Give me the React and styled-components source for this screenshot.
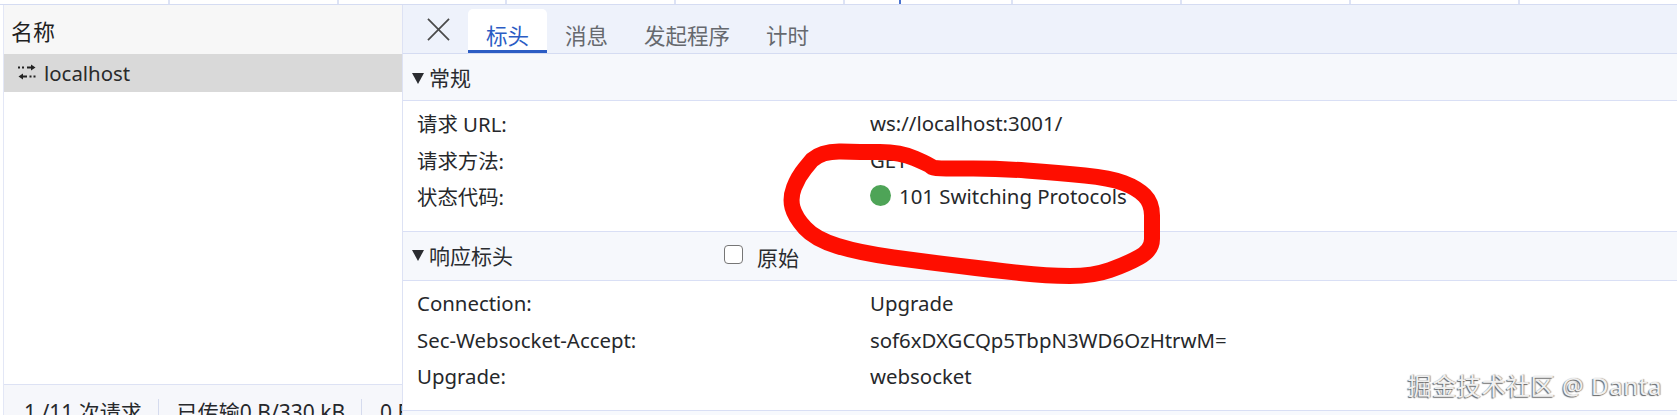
import React from 'react';
import styled, { createGlobalStyle } from 'styled-components';

const GlobalStyle = createGlobalStyle`
  html, body {
    margin: 0;
    padding: 0;
    background: #fff;
  }
  body {
    font-family: 'Noto Sans', 'Noto Sans CJK SC', sans-serif;
    color: #26282b;
  }
`;

const tabs = ['标头', '消息', '发起程序', '计时'];

const generalRows = [
  { name: '请求 URL:', value: 'ws://localhost:3001/' },
  { name: '请求方法:', value: 'GET' },
  { name: '状态代码:', value: '101 Switching Protocols', status: true }
];

const responseRows = [
  { name: 'Connection:', value: 'Upgrade' },
  { name: 'Sec-Websocket-Accept:', value: 'sof6xDXGCQp5TbpN3WD6OzHtrwM=' },
  { name: 'Upgrade:', value: 'websocket' }
];

// the hand-drawn circle, smoothed through the midpoints
const scribble = [
  [812, 160], [822, 151], [860, 152], [900, 152], [930, 165], [934, 169], [993, 168], [1060, 173], [1110, 178],
  [1137, 188], [1152, 203], [1152, 228], [1152, 250], [1127, 264], [1093, 276], [1047, 276],
  [993, 270], [927, 262], [860, 253], [815, 239], [795, 217], [790, 198], [798, 177], [812, 160]
];

const smoothPath = points => {
  let d = `M${points[0][0]} ${points[0][1]}`;
  for (let i = 1; i < points.length - 1; i++) {
    const mx = (points[i][0] + points[i + 1][0]) / 2;
    const my = (points[i][1] + points[i + 1][1]) / 2;
    d += ` Q${points[i][0]} ${points[i][1]} ${mx} ${my}`;
  }
  return d + ` L${points[points.length - 1][0]} ${points[points.length - 1][1]}`;
};

export default function App() {
  return (
    <Page>
      <GlobalStyle />
      <TopStrip>
        {Array.from({ length: 10 }).map((_, i) => (
          <TopCell key={i} first={i === 0}>
            {i === 5 && <BlueTick />}
          </TopCell>
        ))}
      </TopStrip>
      <Main>
        <LeftPane>
          <NameHeader>名称</NameHeader>
          <RequestRow>
            <svg width="20" height="18" viewBox="0 0 20 18" fill="none" stroke="#222" strokeWidth="1.8">
              <path d="M1 3.5h2M5 3.5h2M10 3.5h5" />
              <path d="M14 0.5l4.5 3-4.5 3z" fill="#222" stroke="none" />
              <path d="M5 12.5h5M12.5 12.5h2M16.5 12.5h2" />
              <path d="M6 9.5l-4.5 3 4.5 3z" fill="#222" stroke="none" />
            </svg>
            <span>localhost</span>
          </RequestRow>
          <Footer>
            <FooterItem>1 /11 次请求</FooterItem>
            <FooterItem>已传输0 B/330 kB</FooterItem>
            <FooterItem last>0 B</FooterItem>
          </Footer>
        </LeftPane>
        <RightPane>
          <TabBar>
            <CloseButton>
              <svg width="23" height="23" viewBox="0 0 24 24" fill="none" stroke="#4a4a4a" strokeWidth="1.8">
                <path d="M1 1l22 22M23 1L1 23" />
              </svg>
            </CloseButton>
            {tabs.map((t, i) => (
              <Tab key={t} active={i === 0}>{t}</Tab>
            ))}
          </TabBar>
          <SectionHeader>
            <Triangle />
            常规
          </SectionHeader>
          <Rows>
            {generalRows.map(r => (
              <Row key={r.name}>
                <RowName>{r.name}</RowName>
                <RowValue>
                  {r.status && <StatusDot />}
                  {r.value}
                </RowValue>
              </Row>
            ))}
          </Rows>
          <SectionHeader bordered>
            <Triangle />
            <HeaderTitle>响应标头</HeaderTitle>
            <RawToggle>
              <CheckBox />
              原始
            </RawToggle>
          </SectionHeader>
          <Rows closed>
            {responseRows.map(r => (
              <Row key={r.name}>
                <RowName>{r.name}</RowName>
                <RowValue>{r.value}</RowValue>
              </Row>
            ))}
          </Rows>
        </RightPane>
      </Main>
      <Scribble viewBox="0 0 1677 415">
        <path d={smoothPath(scribble)} fill="none" stroke="#fe0e00" strokeWidth="16" strokeLinecap="round" strokeLinejoin="round" />
      </Scribble>
      <Watermark>掘金技术社区 @ Danta</Watermark>
    </Page>
  );
}

const Page = styled.div`
  position: relative;
  display: flex;
  flex-direction: column;
  width: 1677px;
  height: 415px;
  overflow: hidden;
  background: #fff;
  font-size: 20.4px;
`;

const TopStrip = styled.div`
  display: flex;
  flex: none;
  height: 4px;
  border-bottom: 1px solid #d5dcf2;
`;

const TopCell = styled.div`
  position: relative;
  flex: none;
  box-sizing: border-box;
  width: ${props => (props.first ? '170px' : '168.7px')};
  border-right: 2px solid #dde3f5;
`;

const BlueTick = styled.div`
  position: absolute;
  left: 54px;
  top: 0;
  width: 2px;
  height: 4px;
  background: #4a73d0;
`;

const Main = styled.div`
  display: flex;
  flex: 1;
  min-height: 0;
`;

const LeftPane = styled.div`
  display: flex;
  flex-direction: column;
  flex: none;
  box-sizing: border-box;
  width: 399px;
  margin-left: 3px;
  border-left: 1px solid #e3e7f6;
`;

const NameHeader = styled.div`
  flex: none;
  box-sizing: border-box;
  height: 49px;
  padding: 11px 0 0 7px;
  background: #f7f7f7;
  font-size: 22px;
  line-height: 30px;
  color: #1f1f1f;
`;

const RequestRow = styled.div`
  display: flex;
  align-items: center;
  flex: none;
  gap: 7px;
  height: 38px;
  padding-left: 13px;
  background: #d9d9d9;
  color: #2a2a2a;
`;

const Footer = styled.div`
  display: flex;
  align-items: flex-start;
  flex: none;
  height: 30px;
  margin-top: auto;
  padding-left: 20px;
  overflow: hidden;
  background: #f6f7fb;
  border-top: 1px solid #dde2f4;
  white-space: nowrap;
  font-size: 21px;
`;

const FooterItem = styled.div`
  box-sizing: border-box;
  margin-top: 14px;
  padding-right: 16px;
  margin-right: 18px;
  line-height: 26px;
  border-right: ${props => (props.last ? 'none' : '1px solid #d5dbee')};
`;

const RightPane = styled.div`
  display: flex;
  flex-direction: column;
  flex: 1;
  min-width: 0;
  border-left: 1px solid #dde2f4;
  background: #f7f9fd;
`;

const TabBar = styled.div`
  display: flex;
  align-items: flex-end;
  flex: none;
  box-sizing: border-box;
  height: 49px;
  padding-left: 24px;
  background: #eef2fb;
  border-bottom: 1px solid #d5dcf2;
`;

const CloseButton = styled.div`
  display: flex;
  align-self: flex-start;
  margin: 13px 18px 0 0;
`;

const Tab = styled.div`
  box-sizing: border-box;
  height: 44px;
  padding: 12px 18px 0;
  font-size: 21.5px;
  line-height: 30px;
  color: ${props => (props.active ? '#2b5cc4' : '#66696e')};
  background: ${props => (props.active ? '#fff' : 'transparent')};
  border-radius: 5px 5px 0 0;
  border-bottom: 3px solid ${props => (props.active ? '#2b5cc4' : 'transparent')};
`;

const SectionHeader = styled.div`
  display: flex;
  align-items: center;
  flex: none;
  box-sizing: border-box;
  height: ${props => (props.bordered ? '50px' : '47px')};
  padding-left: 9px;
  padding-bottom: ${props => (props.bordered ? '3px' : '0')};
  background: #f6f8fc;
  border-top: ${props => (props.bordered ? '1px solid #d9dff5' : 'none')};
  border-bottom: 1px solid #d9dff5;
  font-size: 21px;
  color: #2a2c30;
`;

const HeaderTitle = styled.span`
  flex: none;
  width: 295px;
`;

const Triangle = styled.span`
  flex: none;
  width: 0;
  height: 0;
  margin: 2px 5px 0 0;
  border-left: 6px solid transparent;
  border-right: 6px solid transparent;
  border-top: 11px solid #2a2c30;
`;

const RawToggle = styled.label`
  display: flex;
  align-items: center;
  gap: 14px;
  margin-top: 6px;
  line-height: 30px;
`;

const CheckBox = styled.span`
  flex: none;
  box-sizing: border-box;
  width: 19px;
  height: 19px;
  margin-top: -6px;
  border: 1.5px solid #767676;
  border-radius: 4px;
  background: #fff;
`;

const Rows = styled.div`
  display: flex;
  flex-direction: column;
  flex: none;
  box-sizing: border-box;
  height: 130px;
  padding: 4px 0 0 14px;
  background: #fff;
  border-bottom: ${props => (props.closed ? '1px solid #d9dff5' : 'none')};
`;

const Row = styled.div`
  display: flex;
  align-items: center;
  flex: none;
  height: 36.4px;
`;

const RowName = styled.div`
  flex: none;
  width: 453px;
`;

const RowValue = styled.div`
  display: flex;
  align-items: center;
  white-space: nowrap;
`;

const StatusDot = styled.span`
  flex: none;
  width: 21px;
  height: 21px;
  margin-right: 8px;
  border-radius: 50%;
  background: #4ea457;
`;

const Scribble = styled.svg`
  position: absolute;
  left: 0;
  top: 0;
  width: 1677px;
  height: 415px;
  pointer-events: none;
`;

const Watermark = styled.div`
  position: absolute;
  right: 15px;
  top: 369px;
  font-size: 24px;
  line-height: 34px;
  letter-spacing: 0.6px;
  color: #f0f0f0;
  white-space: nowrap;
  text-shadow: -1px 1px 1px #666, 1px 0 1px #999;
`;
